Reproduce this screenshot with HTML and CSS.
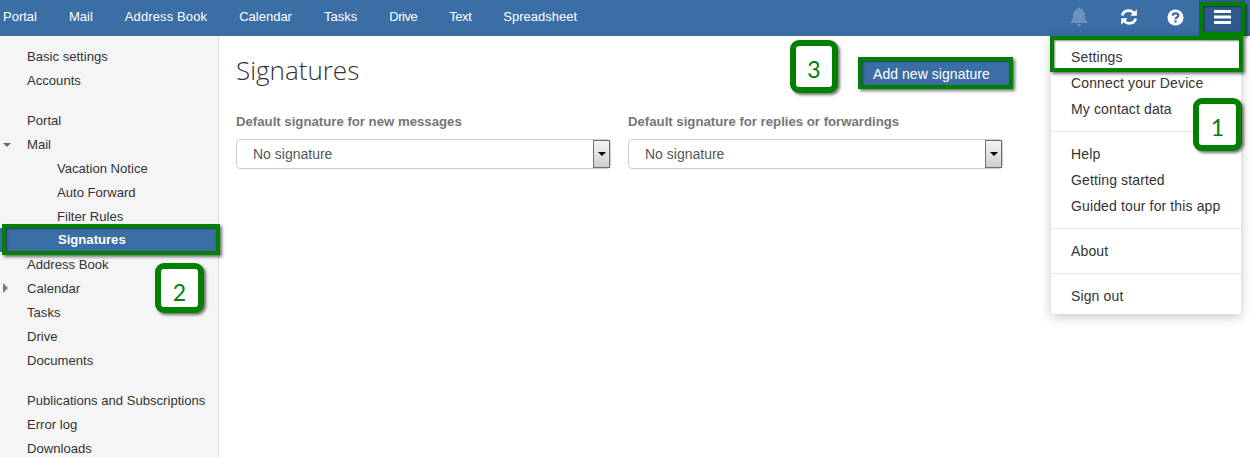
FILE: index.html
```html
<!DOCTYPE html>
<html lang="en">
<head>
<meta charset="utf-8">
<title>Signatures</title>
<link rel="stylesheet" href="styles.css">
</head>
<body>
<header class="topbar">
  <nav class="tabs">
    <a class="tab">Portal</a><a class="tab">Mail</a><a class="tab tab-wide">Address Book</a><a class="tab">Calendar</a><a class="tab">Tasks</a><a class="tab tab-narrow">Drive</a><a class="tab tab-narrow">Text</a><a class="tab">Spreadsheet</a>
  </nav>
  <div class="tools">
    <span class="tool tool-bell">
      <svg class="ico" width="18" height="20" viewBox="0 0 18 20"><path fill="#6b93bd" d="M9 .5c.8 0 1.300.5 1.300 1.200 2.900.5 4.500 2.700 4.500 5.500 0 4.500.8 6 2.700 7.800v1H.5v-1c1.900-1.800 2.700-3.300 2.700-7.800 0-2.800 1.600-5 4.500-5.500C7.700 1 8.200.5 9 .5z"/><path fill="#6b93bd" d="M7 17h4c0 1.200-.9 2.200-2 2.200S7 18.200 7 17z"/></svg>
    </span>
    <span class="tool">
      <svg class="ico" width="18" height="18" viewBox="0 0 18 18"><path fill="none" stroke="#fff" stroke-width="2.800" d="M2.300 7.500C3 4.500 5.500 2.700 8.800 2.700c2.300 0 4 1 5.200 2.800"/><path fill="#fff" d="M16.800 1.200v6.500h-6.500z"/><path fill="none" stroke="#fff" stroke-width="2.800" d="M15.700 10.500C15 13.500 12.500 15.300 9.200 15.300c-2.300 0-4-1-5.200-2.800"/><path fill="#fff" d="M1.200 16.800v-6.500h6.500z"/></svg>
    </span>
    <span class="tool">
      <svg class="ico" width="17" height="17" viewBox="0 0 18 18"><circle cx="9" cy="9" r="8.500" fill="#fff"/><path fill="none" stroke="#3a6ea5" stroke-width="2.400" d="M6 7c.2-1.600 1.400-2.300 3-2.300 1.700 0 3 .9 3 2.300 0 1.800-3 1.900-3 3.800"/><rect x="7.800" y="12" width="2.400" height="2.400" fill="#3a6ea5"/></svg>
    </span>
    <span class="tool tool-active">
      <svg class="ico" width="17" height="14" viewBox="0 0 17 14"><rect width="17" height="3" fill="#fff"/><rect y="5.500" width="17" height="3" fill="#fff"/><rect y="11" width="17" height="3" fill="#fff"/></svg>
    </span>
  </div>
</header>

<div class="body">
  <aside class="sidebar">
    <ul class="tree">
      <li class="row">Basic settings</li>
      <li class="row">Accounts</li>
    </ul>
    <ul class="tree">
      <li class="row">Portal</li>
      <li class="row"><span class="arrow-down"></span>Mail</li>
      <li class="row sub">Vacation Notice</li>
      <li class="row sub">Auto Forward</li>
      <li class="row sub">Filter Rules</li>
      <li class="row sub selected">Signatures</li>
      <li class="row">Address Book</li>
      <li class="row"><span class="arrow-right"></span>Calendar</li>
      <li class="row">Tasks</li>
      <li class="row">Drive</li>
      <li class="row">Documents</li>
    </ul>
    <ul class="tree">
      <li class="row">Publications and Subscriptions</li>
      <li class="row">Error log</li>
      <li class="row">Downloads</li>
    </ul>
  </aside>
  <main class="content">
    <div class="head">
      <h1 class="title">Signatures</h1>
      <button class="add-btn">Add new signature</button>
    </div>
    <div class="fields">
      <div class="field">
        <label class="field-label">Default signature for new messages</label>
        <div class="select"><span class="select-value">No signature</span><span class="select-btn"><span class="select-caret"></span></span></div>
      </div>
      <div class="field">
        <label class="field-label">Default signature for replies or forwardings</label>
        <div class="select"><span class="select-value">No signature</span><span class="select-btn"><span class="select-caret"></span></span></div>
      </div>
    </div>
  </main>
</div>

<div class="menu">
  <a class="menu-item">Settings</a>
  <a class="menu-item">Connect your Device</a>
  <a class="menu-item">My contact data</a>
  <hr class="menu-sep">
  <a class="menu-item">Help</a>
  <a class="menu-item">Getting started</a>
  <a class="menu-item">Guided tour for this app</a>
  <hr class="menu-sep">
  <a class="menu-item">About</a>
  <hr class="menu-sep">
  <a class="menu-item">Sign out</a>
</div>

<div class="mark mark-burger"></div>
<div class="mark mark-settings"></div>
<div class="mark mark-signatures"></div>
<div class="mark mark-add"></div>
<div class="num num-1">1</div>
<div class="num num-2">2</div>
<div class="num num-3">3</div>
</body>
</html>
```

FILE: styles.css
```css
* { box-sizing: border-box; }
html, body { margin: 0; height: 100%; }
body {
  position: relative;
  overflow: hidden;
  background: #fff;
  color: #333;
  font: 13.1px/20px "Liberation Sans", Arial, sans-serif;
  display: flex;
  flex-direction: column;
}
.topbar {
  flex: none;
  height: 36px;
  background: #3a6ea5;
  display: flex;
  justify-content: space-between;
  color: #fff;
}
.tabs { display: flex; margin-left: -13px; }
.tab { padding: 0 16px; line-height: 33px; color: #fff; font-size: 13px; }
.tab-wide { letter-spacing: .12px; }
.tab-narrow { letter-spacing: -.45px; }
.tools { display: flex; padding-right: 5px; }
.tool { width: 47px; display: flex; align-items: center; justify-content: center; padding-bottom: 2px; }
.tool-bell { margin-right: 3px; }
.tool-active { width: 46px; background: #2f5a8c; }
.ico { display: block; }

.body { flex: 1; display: flex; min-height: 0; }
.sidebar {
  flex: none;
  width: 219px;
  background: #f5f5f5;
  border-right: 1px solid #ddd;
  padding-top: 8px;
}
.tree { list-style: none; margin: 0 0 16px; padding: 0; }
.row { position: relative; height: 24px; line-height: 26px; padding-left: 27px; white-space: nowrap; }
.sub { padding-left: 57px; }
.selected { background: #3a6ea5; color: #fff; font-weight: bold; padding-left: 58px; line-height: 24px; }
.arrow-down, .arrow-right { position: absolute; width: 0; height: 0; border-style: solid; }
.arrow-down { left: 3px; top: 11px; border-width: 4px 4.5px 0; border-color: #6a6a6a transparent transparent; }
.arrow-right { left: 3px; top: 7px; border-width: 5px 0 5px 5px; border-color: transparent transparent transparent #6f7f6f; }

.content { flex: 1; padding: 0 0 0 17px; }
.head { display: flex; justify-content: space-between; width: 777px; height: 67px; padding-top: 16px; }
.title { margin: 0; font: 300 26px/36px "Open Sans", sans-serif; color: #333; }
.add-btn {
  margin: 5px 0 0;
  width: 155px;
  height: 32px;
  padding: 1px 0 0 15px;
  text-align: left;
  border: 0;
  background: #3a6ea5;
  color: #fff;
  font: 14px "Liberation Sans", Arial, sans-serif;
  letter-spacing: .05px;
}
.fields { display: flex; gap: 17px; padding-top: 8px; }
.field { width: 375px; }
.field-label { display: block; font-weight: bold; color: #767676; height: 20px; line-height: 22px; margin-bottom: 8px; white-space: nowrap; font-size: 13.2px; }
.select {
  display: flex;
  justify-content: space-between;
  height: 30px;
  border: 1px solid #ccc;
  border-radius: 4px;
  background: #fff;
  color: #555;
  font-size: 14px;
}
.select-value { padding-left: 16px; line-height: 28px; }
.select-btn {
  width: 17px;
  height: 28px;
  border: 1px solid #707070;
  background: linear-gradient(#f4f4f4, #cfcfcf);
  display: flex;
  align-items: center;
  justify-content: center;
}
.select-caret { width: 0; height: 0; border-style: solid; border-width: 4px 4px 0; border-color: #000 transparent transparent; }

.menu {
  position: absolute;
  left: 1051px;
  top: 36px;
  width: 190px;
  height: 278px;
  background: #fff;
  border-radius: 0 0 4px 4px;
  box-shadow: 0 3px 12px rgba(0,0,0,.22);
  padding-top: 8px;
  font-size: 14px;
  letter-spacing: .13px;
}
.menu-item { display: block; height: 26px; line-height: 26px; padding-left: 20px; color: #333; white-space: nowrap; }
.menu-sep { margin: 9px 0 9px; border: 0; border-top: 1px solid #e5e5e5; height: 1px; }

.mark {
  position: absolute;
  border: 4px solid #008000;
  box-shadow: 2px 2px 3px rgba(0,0,0,.55), inset 1px 1px 2px rgba(0,0,0,.45);
}
.mark-burger { left: 1199px; top: 2px; width: 46px; height: 34px; }
.mark-settings { left: 1050px; top: 36px; width: 193px; height: 36px; }
.mark-signatures { left: 2px; top: 224px; width: 218px; height: 31px; }
.mark-add { left: 858px; top: 57px; width: 155px; height: 32px; }
.num {
  position: absolute;
  width: 49px;
  height: 53px;
  border: 6px solid #008000;
  border-radius: 9px;
  background: #fff;
  color: #008000;
  font: 400 23px/46px Lato, sans-serif;
  text-align: center;
  box-shadow: 2px 2px 3px rgba(0,0,0,.55);
}
.num-1 { left: 1193px; top: 98px; }
.num-2 { left: 155px; top: 263px; height: 50px; line-height: 47px; }
.num-3 { left: 790px; top: 40px; width: 48px; }
```
